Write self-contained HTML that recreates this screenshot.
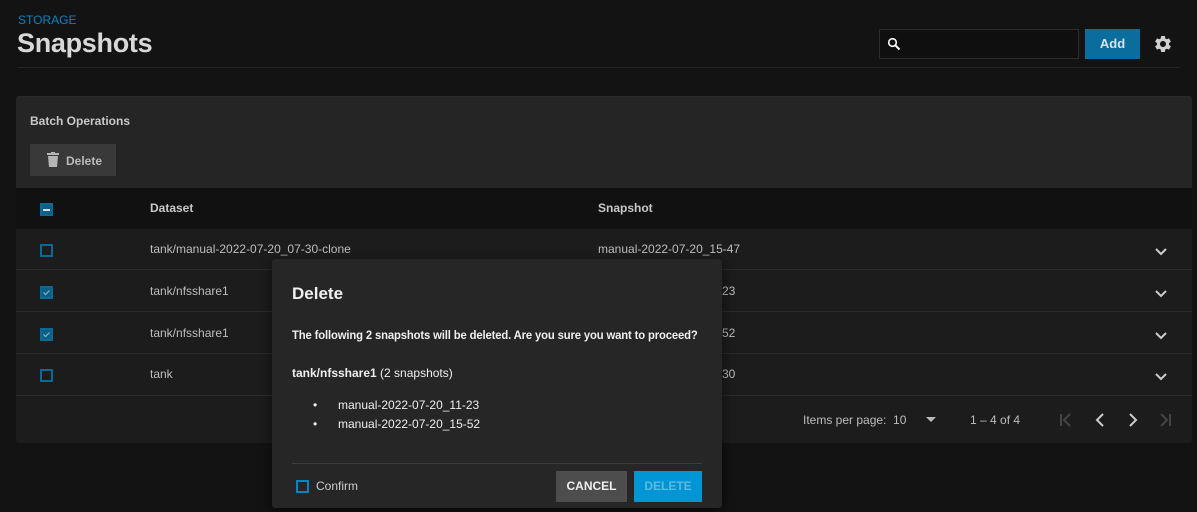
<!DOCTYPE html>
<html><head><meta charset="utf-8"><style>
*{box-sizing:border-box;margin:0;padding:0}
body{width:1197px;height:512px;background:#131313;font-family:"Liberation Sans",sans-serif;position:relative;overflow:hidden;color:#cfcfcf}
.a{position:absolute}
.t{font-size:12px;color:#bdbdbd;white-space:nowrap}
.cb{position:absolute;width:13px;height:13px;border:2px solid #0a6a96}
.cbf{background:#0a5f85}
.chev{position:absolute;right:24px;width:14px;height:10px}
</style></head><body>
<div class="a" style="left:18px;top:13px;font-size:12px;color:#0a84c0">STORAGE</div>
<div class="a" style="left:17px;top:28px;font-size:27px;font-weight:bold;color:#d8d8d8;letter-spacing:-0.3px">Snapshots</div>
<div class="a" style="left:18px;top:67px;width:1162px;height:1px;background:#262626"></div>
<div class="a" style="left:879px;top:29px;width:200px;height:30px;border:1px solid #2c2c2c;background:#0f0f0f"></div>
<svg class="a" style="left:887px;top:37px" width="14" height="14" viewBox="0 0 14 14"><circle cx="5.5" cy="5.5" r="3.8" stroke="#fff" stroke-width="1.6" fill="none"/><path d="M8.3 8.3L12.5 12.5" stroke="#fff" stroke-width="2"/></svg>
<div class="a" style="left:1085px;top:29px;width:55px;height:30px;background:#0a6d9e;color:#d6e4ec;font-size:13px;font-weight:bold;text-align:center;line-height:30px">Add</div>
<svg class="a" style="left:1153px;top:34px" width="20" height="20" viewBox="0 0 24 24"><path fill="#cfcfcf" d="M19.14 12.94c.04-.3.06-.61.06-.94 0-.32-.02-.64-.07-.94l2.03-1.580a.49.49 0 00.12-.61l-1.920-3.32a.488.488 0 00-.59-.22l-2.39.96c-.5-.38-1.030-.7-1.62-.94l-.36-2.540a.484.484 0 00-.48-.41h-3.84c-.24 0-.43.17-.47.41l-.36 2.54c-.59.24-1.130.57-1.62.94l-2.39-.96c-.22-.08-.47 0-.59.22L2.74 8.87c-.12.21-.08.47.12.61l2.03 1.58c-.05.3-.09.63-.09.94s.02.64.07.94l-2.030 1.58a.49.49 0 00-.12.61l1.920 3.32c.12.22.37.29.59.22l2.39-.96c.5.38 1.030.7 1.620.94l.36 2.54c.05.24.24.41.48.41h3.84c.24 0 .44-.17.47-.41l.36-2.540c.59-.24 1.130-.56 1.620-.94l2.39.96c.22.08.47 0 .59-.22l1.920-3.32c.12-.22.07-.47-.12-.61l-2.010-1.580zM12 15.6c-1.980 0-3.6-1.620-3.6-3.6s1.620-3.6 3.6-3.6 3.6 1.620 3.6 3.6-1.620 3.6-3.6 3.6z"/></svg>

<div class="a" style="left:16px;top:96px;width:1176px;height:347px;background:#1c1c1c;border-radius:3px;overflow:hidden;border-top:1px solid #2a2a2a">
 <div class="a" style="left:0;top:0;width:1176px;height:91px;background:#252525"></div>
 <div class="a" style="left:14px;top:17px;font-size:12px;font-weight:bold;color:#c8c8c8">Batch Operations</div>
 <div class="a" style="left:14px;top:47px;width:86px;height:32px;background:#393939"></div>
 <svg class="a" style="left:31px;top:55px" width="12" height="15" viewBox="0 0 12 15"><rect x="0" y="1" width="12" height="2" fill="#b5b5b5"/><rect x="4" y="0" width="4" height="2" fill="#b5b5b5"/><path d="M1 4h10l-1 11H2z" fill="#b5b5b5"/></svg>
 <div class="a" style="left:50px;top:57px;font-size:12px;font-weight:bold;color:#bbb">Delete</div>
 <div class="a" style="left:0;top:91px;width:1176px;height:41px;background:#111"></div>
 <div class="cb cbf" style="left:24px;top:106px"><div style="position:absolute;left:1px;top:4px;width:7px;height:1.5px;background:#ddd"></div></div>
 <div class="a t" style="left:134px;top:104px;font-weight:bold;color:#c8c8c8">Dataset</div>
 <div class="a t" style="left:582px;top:104px;font-weight:bold;color:#c8c8c8">Snapshot</div>
 <div class="a" style="left:0;top:172px;width:1176px;height:1px;background:#2b2b2b"></div>
 <div class="a" style="left:0;top:214px;width:1176px;height:1px;background:#2b2b2b"></div>
 <div class="a" style="left:0;top:256px;width:1176px;height:1px;background:#2b2b2b"></div>
 <div class="a" style="left:0;top:298px;width:1176px;height:1px;background:#2b2b2b"></div>
 <div class="cb" style="left:24px;top:147px"></div>
 <div class="cb cbf" style="left:24px;top:189px"><svg style="position:absolute;left:0;top:0" width="9" height="9" viewBox="0 0 9 9"><path d="M1.5 4.5l2 2 4-4" stroke="#8fb3c6" stroke-width="1.2" fill="none"/></svg></div>
 <div class="cb cbf" style="left:24px;top:231px"><svg style="position:absolute;left:0;top:0" width="9" height="9" viewBox="0 0 9 9"><path d="M1.5 4.5l2 2 4-4" stroke="#8fb3c6" stroke-width="1.2" fill="none"/></svg></div>
 <div class="cb" style="left:24px;top:272px"></div>
 <div class="a t" style="left:134px;top:145px">tank/manual-2022-07-20_07-30-clone</div>
 <div class="a t" style="left:582px;top:145px">manual-2022-07-20_15-47</div>
 <div class="a t" style="left:134px;top:187px">tank/nfsshare1</div>
 <div class="a t" style="left:134px;top:229px">tank/nfsshare1</div>
 <div class="a t" style="left:134px;top:270px">tank</div>
 <div class="a t" style="left:706px;top:187px">23</div>
 <div class="a t" style="left:706px;top:229px">52</div>
 <div class="a t" style="left:706px;top:270px">30</div>
 <svg class="chev" style="top:150px" viewBox="0 0 14 10"><path d="M2 2l5 5 5-5" stroke="#ccc" stroke-width="2" fill="none"/></svg>
 <svg class="chev" style="top:192px" viewBox="0 0 14 10"><path d="M2 2l5 5 5-5" stroke="#ccc" stroke-width="2" fill="none"/></svg>
 <svg class="chev" style="top:234px" viewBox="0 0 14 10"><path d="M2 2l5 5 5-5" stroke="#ccc" stroke-width="2" fill="none"/></svg>
 <svg class="chev" style="top:275px" viewBox="0 0 14 10"><path d="M2 2l5 5 5-5" stroke="#ccc" stroke-width="2" fill="none"/></svg>
 <div class="a t" style="left:787px;top:316px">Items per page:&nbsp; 10</div>
 <svg class="a" style="left:910px;top:320px" width="10" height="6"><path d="M0 0h10L5 5z" fill="#bbb"/></svg>
 <div class="a t" style="left:954px;top:316px">1 – 4 of 4</div>
 <svg class="a" style="left:1040px;top:315px" width="130" height="16" viewBox="0 0 130 16"><g fill="none" stroke-width="2"><path d="M5 2v12M14 2l-6 6 6 6" stroke="#444"/><path d="M47 2l-6 6 6 6" stroke="#ccc"/><path d="M74 2l6 6-6 6" stroke="#ccc"/><path d="M105 2l6 6-6 6M114 2v12" stroke="#444"/></g></svg>
</div>

<div class="a" style="left:272px;top:259px;width:450px;height:249px;background:#262626;border-radius:3px;box-shadow:0 4px 12px rgba(0,0,0,.6)">
 <div class="a" style="left:20px;top:25px;font-size:17px;font-weight:bold;color:#f0f0f0">Delete</div>
 <div class="a" style="left:20px;top:69px;font-size:12px;font-weight:bold;color:#eee;white-space:nowrap;letter-spacing:-0.15px;transform:scaleX(0.94);transform-origin:0 0">The following 2 snapshots will be deleted. Are you sure you want to proceed?</div>
 <div class="a" style="left:20px;top:107px;font-size:12px;color:#eee;white-space:nowrap"><b>tank/nfsshare1</b> (2 snapshots)</div>
 <div class="a" style="left:41px;top:137px;font-size:12px;color:#eee;line-height:19px">•</div>
 <div class="a" style="left:41px;top:156px;font-size:12px;color:#eee;line-height:19px">•</div>
 <div class="a" style="left:66px;top:137px;font-size:12px;color:#eee;line-height:19px">manual-2022-07-20_11-23<br>manual-2022-07-20_15-52</div>
 <div class="a" style="left:20px;top:204px;width:410px;height:1px;background:#3c3c3c"></div>
 <div class="a" style="left:24px;top:221px;width:13px;height:13px;border:2px solid #0a84c0"></div>
 <div class="a" style="left:44px;top:220px;font-size:12px;color:#ccc">Confirm</div>
 <div class="a" style="left:284px;top:212px;width:71px;height:31px;background:#4d4d4d;color:#eee;font-size:12px;font-weight:bold;text-align:center;line-height:31px">CANCEL</div>
 <div class="a" style="left:362px;top:212px;width:68px;height:31px;background:#0095d5;color:#5fb8de;font-size:12px;font-weight:bold;text-align:center;line-height:31px">DELETE</div>
</div>
</body></html>
